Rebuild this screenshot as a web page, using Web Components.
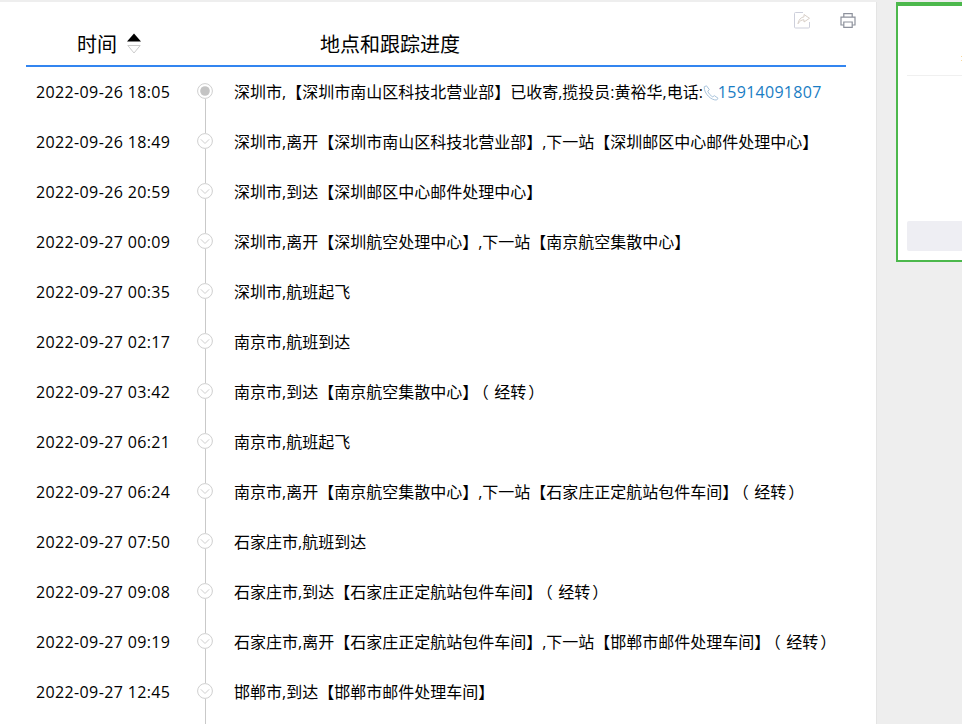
<!DOCTYPE html>
<html><head><meta charset="utf-8"><title>物流跟踪</title>
<style>
html,body{margin:0;padding:0;height:724px;overflow:hidden;background:#eee}
body{font-family:"Open Sans","Noto Sans CJK SC",sans-serif;color:#000;text-spacing-trim:space-all}
.po{font-family:"Noto Sans CJK SC",sans-serif;font-feature-settings:"halt";line-height:1;margin-left:2.5px;margin-right:5.5px}
.pc{font-family:"Noto Sans CJK SC",sans-serif;font-feature-settings:"halt";line-height:1;margin-left:2px;margin-right:6px}
</style></head><body>
<track-page></track-page>
<template id="t-page"><style>
:host{display:flex;height:724px;padding-top:2px;box-sizing:border-box;overflow:hidden}
.main{width:877px;flex:none;background:#fff;box-shadow:inset -1px 0 0 #e4e4e4;padding-left:26px;box-sizing:border-box;overflow:hidden}
.side{margin-left:19px;flex:1;min-width:0}
</style><div class="main"><slot name="main"></slot></div><div class="side"><slot name="side"></slot></div></template>
<template id="t-toolbar"><style>
:host{display:flex;justify-content:flex-end;gap:28px;width:831px;height:19px;padding-top:9px}
svg{display:block;width:18px;height:18px;flex:none}
</style>
<svg viewBox="0 0 18 18" fill="none" stroke-width="1"><path d="M10 1.500H2.500a1 1 0 0 0-1 1v13.500a1 1 0 0 0 1 1h13a1 1 0 0 0 1-1v-5" stroke="#cdcfdb"/><path d="M11 3.500l5.500 3.800-5.500 3.700V8.800C8.500 8.800 6.500 10 5 12.800 5.300 9 8 6.200 11 5.800z" stroke="#d8cfc8"/></svg>
<svg viewBox="0 0 18 18" fill="none" stroke="#8d919c" stroke-width="1.200"><path d="M4.800 6V2.600h8.400V6M4.800 14H2V6.200h14V14h-2.800"/><path d="M4.800 11h8.400v5.400H4.800z"/></svg>
</template>
<template id="t-head"><style>
:host{display:flex;box-sizing:border-box;width:820px;height:37px;border-bottom:2px solid #3385f0;font-size:20px;line-height:28px;padding-top:1px}
.time{margin-left:51px;width:243px;display:flex;align-items:flex-start}
.sort{margin-left:10px;display:flex;flex-direction:column;gap:3px;width:14px;padding-top:2px}
.sort svg{display:block;width:14px;height:9px}
</style><div class="time"><span>时间</span><span class="sort">
<svg viewBox="0 0 14 9"><path d="M7 .5L14 8.500H0z" fill="#000"/></svg>
<svg viewBox="0 0 14 9"><path d="M.8.500h12.400L7 8z" fill="none" stroke="#ccc"/></svg></span></div><div>地点和跟踪进度</div></template>
<template id="t-row"><style>
:host{display:flex;height:50px;width:820px;font-size:16px;line-height:22px;box-sizing:border-box}
.t{width:150px;margin-left:10px;flex:none;padding-top:14px;white-space:nowrap;letter-spacing:.37px}
.rail{width:38px;flex:none;display:flex;flex-direction:column;align-items:center}
.rail::before{content:"";width:1px;height:16px;flex:none;background:var(--top,#c9c9c9)}
.rail::after{content:"";width:1px;flex:1 0 var(--tail,0px);background:#c9c9c9}
.c{margin-left:10px;padding-top:14px;white-space:nowrap;flex:1}
</style><div class="t"><slot name="time"></slot></div><div class="rail"><slot name="dot"></slot></div><div class="c"><slot></slot></div></template>
<template id="t-dot"><style>
:host{display:block;width:16px;height:16px;flex:none}
svg{display:block;width:16px;height:16px}
</style><svg viewBox="0 0 16 16" fill="none"></svg></template>
<template id="t-side"><style>
:host{display:block;position:relative;box-sizing:border-box;height:260px;background:#fff;border:2px solid #4cb84c;border-top-width:4px;border-right:0;padding:0 0 0 9px}
.line{height:1px;background:#f0f0f0;margin-top:69px}
.blk{height:30px;margin-top:145px;background:#eeeef3;border-radius:2px 0 0 2px}
.speck{position:absolute;right:0;top:50px;width:1px;height:1px;background:#f8d9a0;box-shadow:0 4px 0 #f8d9a0}
</style><div class="speck"></div><div class="line"></div><div class="blk"></div></template>
<script>
function def(name,tpl){customElements.define(name,class extends HTMLElement{constructor(){super();const r=this.attachShadow({mode:"open"});r.appendChild(document.getElementById(tpl).content.cloneNode(true))}})}
def("track-page","t-page");def("track-toolbar","t-toolbar");def("track-head","t-head");def("track-side","t-side");def("track-row","t-row");
customElements.define("track-dot",class extends HTMLElement{constructor(){super();const r=this.attachShadow({mode:"open"});r.appendChild(document.getElementById("t-dot").content.cloneNode(true))}
connectedCallback(){const s=this.shadowRoot.querySelector("svg");s.innerHTML=this.hasAttribute("first")?'<circle cx="8" cy="8" r="7.400" stroke="#cfcfcf"/><circle cx="8" cy="8" r="4.800" fill="#c4c4c4"/>':'<circle cx="8" cy="8" r="7.400" stroke="#cfcfcf"/><path d="M3.800 6.300L8 10.500l4.200-4.200" stroke="#cfcfcf"/>'}});
const rows=[
["2022-09-26 18:05","深圳市,【深圳市南山区科技北营业部】已收寄,揽投员:黄裕华,电话:","15914091807"],
["2022-09-26 18:49","深圳市,离开【深圳市南山区科技北营业部】,下一站【深圳邮区中心邮件处理中心】"],
["2022-09-26 20:59","深圳市,到达【深圳邮区中心邮件处理中心】"],
["2022-09-27 00:09","深圳市,离开【深圳航空处理中心】,下一站【南京航空集散中心】"],
["2022-09-27 00:35","深圳市,航班起飞"],
["2022-09-27 02:17","南京市,航班到达"],
["2022-09-27 03:42","南京市,到达【南京航空集散中心】（经转）"],
["2022-09-27 06:21","南京市,航班起飞"],
["2022-09-27 06:24","南京市,离开【南京航空集散中心】,下一站【石家庄正定航站包件车间】（经转）"],
["2022-09-27 07:50","石家庄市,航班到达"],
["2022-09-27 09:08","石家庄市,到达【石家庄正定航站包件车间】（经转）"],
["2022-09-27 09:19","石家庄市,离开【石家庄正定航站包件车间】,下一站【邯郸市邮件处理车间】（经转）"],
["2022-09-27 12:45","邯郸市,到达【邯郸市邮件处理车间】"]];
const phone='<svg style="display:inline-block;vertical-align:-3px;width:16px;height:16px" viewBox="0 0 16 16" fill="none" stroke="#a9c4dc" stroke-width="1"><path d="M1.200 1.800L3.500.8l2.800 3.800L4.800 6.200c.8 2.200 2.800 4.600 5 5.700l1.500-1.300 3.700 2.600-1.300 1.800C8.500 15.500 1 9 1.200 1.800z"/></svg>';
const fmt=s=>s.replace("（",'<span class="po">（</span>').replace("）",'<span class="pc">）</span>');
let html='<track-page><div slot="main"><track-toolbar></track-toolbar><track-head></track-head><div>';
rows.forEach((r,i)=>{const st=i==0?' style="--top:transparent"':(i==rows.length-1?' style="--tail:60px"':'');html+=`<track-row${st}><span slot="time">${r[0]}</span><track-dot slot="dot"${i==0?' first':''}></track-dot><span>${fmt(r[1])}${r[2]?phone+`<span style="color:#1a7dc4;letter-spacing:.28px;margin-left:-1px">${r[2]}</span>`:''}</span></track-row>`});
html+='</div></div><track-side slot="side"></track-side></track-page>';
document.querySelector("track-page").outerHTML=html;
</script>
</body></html>
